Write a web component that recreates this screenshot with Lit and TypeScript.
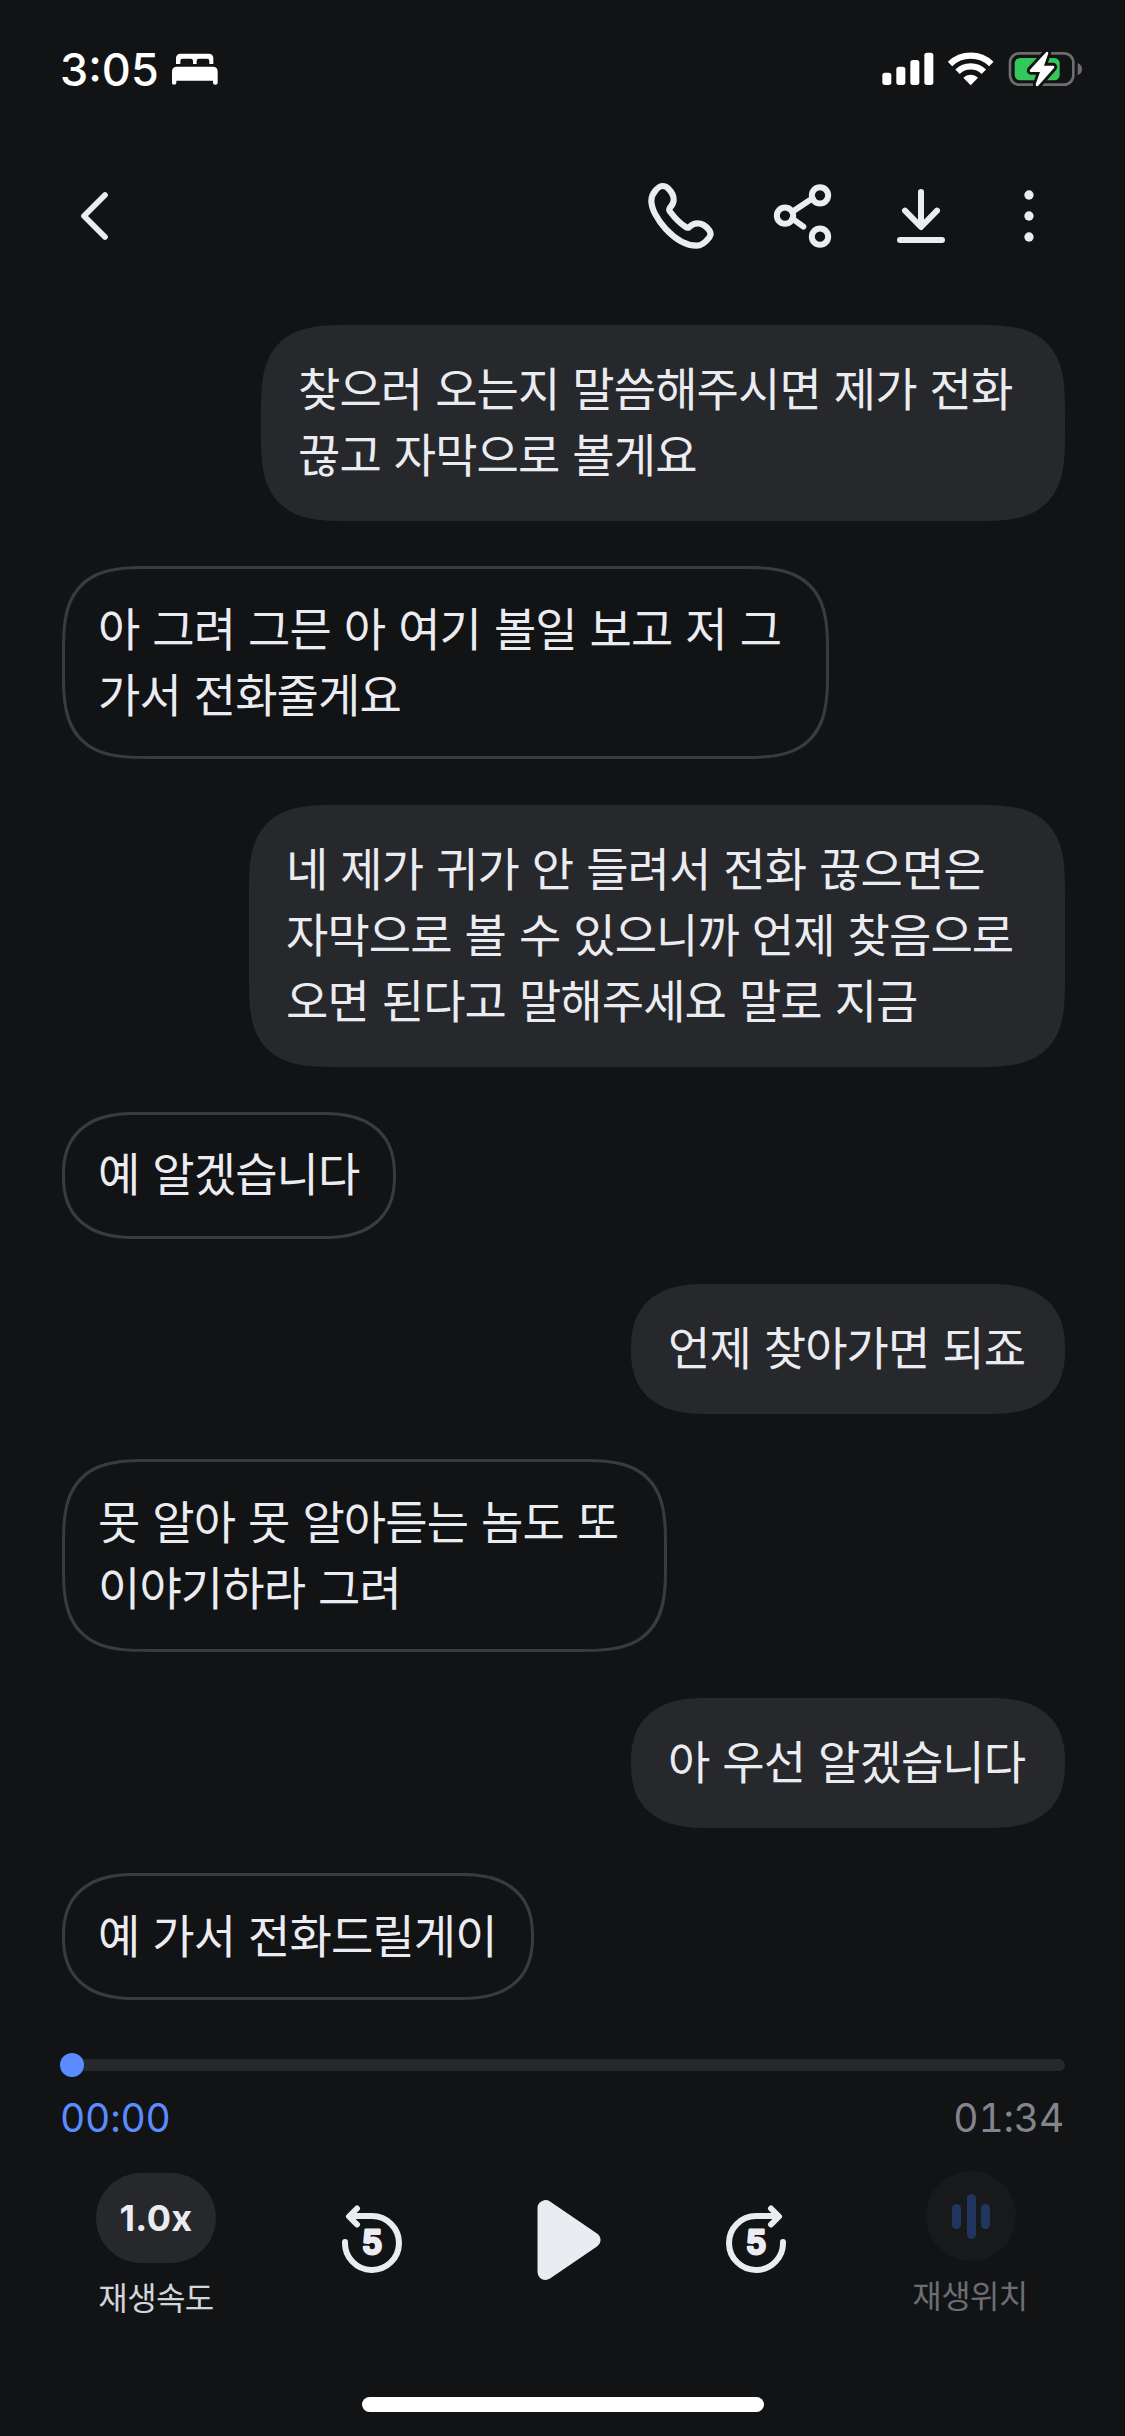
import { LitElement, html, css, svg } from "lit";
import { customElement, property } from "lit/decorators.js";
import { classMap } from "lit/directives/class-map.js";
import { styleMap } from "lit/directives/style-map.js";

interface Message {
  mine: boolean;
  width: number;
  lines: string[];
}

const MESSAGES: Message[] = [
  { mine: true, width: 804, lines: ["찾으러 오는지 말씀해주시면 제가 전화", "끊고 자막으로 볼게요"] },
  { mine: false, width: 767, lines: ["아 그려 그믄 아 여기 볼일 보고 저 그", "가서 전화줄게요"] },
  {
    mine: true,
    width: 816,
    lines: ["네 제가 귀가 안 들려서 전화 끊으면은", "자막으로 볼 수 있으니까 언제 찾음으로", "오면 된다고 말해주세요 말로 지금"],
  },
  { mine: false, width: 334, lines: ["예 알겠습니다"] },
  { mine: true, width: 434, lines: ["언제 찾아가면 되죠"] },
  { mine: false, width: 605, lines: ["못 알아 못 알아듣는 놈도 또", "이야기하라 그려"] },
  { mine: true, width: 434, lines: ["아 우선 알겠습니다"] },
  { mine: false, width: 472, lines: ["예 가서 전화드릴게이"] },
];

@customElement("status-bar")
export class StatusBar extends LitElement {
  static styles = css`
    :host { display: block; }
    .bar {
      display: flex;
      align-items: center;
      height: 138px;
      box-sizing: border-box;
      padding: 0 41.7px 0 60px;
      color: #fff;
    }
    .time {
      font: 500 45px/54px Inter, "Liberation Sans", sans-serif;
      width: 111px;
      padding-top: 1px;
      white-space: nowrap;
    }
    .spacer { flex: 1; }
    svg { display: block; }
    .wifi { margin-left: 13.6px; }
    .battery { margin-left: 13px; }
  `;
  render() {
    return html`
      <div class="bar">
        <span class="time">3:05</span>
        <svg width="48" height="34" viewBox="393 67 144 102" fill="#fff">
          <path d="M408 103V86Q408 72 422 72H506Q520 72 520 86V103H508V94Q508 87 501 87H477Q470 87 470 94V103H459V94Q459 87 452 87H428Q421 87 421 94V103Z" />
          <path d="M396 160V126Q396 111 411 111H518Q533 111 533 126V160Q533 165 526 165Q519 165 519 160V153H409V160Q409 165 402 165Q396 165 396 160Z" />
        </svg>
        <span class="spacer"></span>
        <svg width="52" height="34" viewBox="95 66 156 102" fill="#fff">
          <rect x="96" y="128" width="27" height="37" rx="8" />
          <rect x="138" y="110" width="27" height="55" rx="8" />
          <rect x="180" y="90" width="27" height="75" rx="8" />
          <rect x="222" y="68" width="27" height="97" rx="8" />
        </svg>
        <svg class="wifi" width="48" height="34" viewBox="292 65 144 102">
          <g fill="none" stroke="#fff" stroke-width="19">
            <path d="M301 101A89.5 89.5 0 0 1 425 101" />
            <path d="M323.500 124A57 57 0 0 1 402.500 124" />
          </g>
          <path d="M363 165L341 142A32 32 0 0 1 385 142Z" fill="#fff" />
        </svg>
        <svg class="battery" width="75" height="38" viewBox="475 60 225 114">
          <rect x="481" y="70" width="190" height="94" rx="28" fill="none" stroke="#6d6d6f" stroke-width="8" />
          <path d="M684 99Q697 105 697 117.500T684 136Z" fill="#6d6d6f" />
          <rect x="495" y="84" width="135" height="67" rx="16" fill="#34c759" />
          <path
            d="M590 66L541 119Q538 125 544 126H571L558 163Q558 171 565 168L613 114Q616 108 610 107H583L596 70Q596 64 590 66Z"
            fill="#fff" stroke="#121315" stroke-width="17" paint-order="stroke" stroke-linejoin="round" />
        </svg>
      </div>
    `;
  }
}

@customElement("call-header")
export class CallHeader extends LitElement {
  static styles = css`
    :host { display: block; }
    .header {
      display: flex;
      align-items: center;
      height: 156px;
      padding: 0 88px 0 78px;
    }
    svg { display: block; fill: none; stroke: #ebebf2; stroke-linecap: round; stroke-linejoin: round; }
    .spacer { flex: 1; }
    .share { margin-left: 55px; }
    .download { margin-left: 61px; }
    .more { margin-left: 74px; fill: #ebebf2; stroke: none; }
  `;
  render() {
    return html`
      <div class="header">
        <svg width="34" height="52" viewBox="114 90 102 156" stroke-width="17">
          <path d="M195 105L132 168L195 231" />
        </svg>
        <span class="spacer"></span>
        <svg width="72" height="72" viewBox="75 60 216 216" stroke-width="18.500">
          <path d="M128 78C117 78 94 98 94 122C94 170 165 256 230 257C245 257 258 245 268 232C273 225 273 218 268 211C260 200 246 190 232 190C218 190 212 198 207 202C204 204 200 203 196 200C180 190 160 168 151 156C147 151 147 147 150 143C155 137 161 131 161 119C161 108 154 95 146 87C141 81 135 78 128 78Z" />
        </svg>
        <svg class="share" width="62" height="68" viewBox="456 66 186 204" stroke-width="18">
          <circle cx="600" cy="106" r="24.500" />
          <circle cx="495" cy="167" r="24.500" />
          <circle cx="600" cy="230" r="24.500" />
          <path d="M517 155L578 115M517 176L550 200" />
        </svg>
        <svg class="download" width="52" height="60" viewBox="825 78 156 180" stroke-width="18">
          <path d="M903 96V200M855 152L903 201L951 152M840 240H966" />
        </svg>
        <svg class="more" width="16" height="56" viewBox="1203 84 48 168">
          <circle cx="1227" cy="105" r="14" />
          <circle cx="1227" cy="168" r="14" />
          <circle cx="1227" cy="231" r="14" />
        </svg>
      </div>
    `;
  }
}

@customElement("chat-bubble")
export class ChatBubble extends LitElement {
  @property({ attribute: false }) message!: Message;
  static styles = css`
    :host { display: flex; }
    .bubble {
      box-sizing: border-box;
      border-radius: 64px;
      font: 400 46px/66px "Noto Sans CJK KR", sans-serif;
      letter-spacing: -0.9px;
      word-spacing: 3.5px;
      color: #ebecf1;
      white-space: nowrap;
    }
    .mine { margin-left: auto; padding: 28px 37px 36px; background: #27282b; }
    .theirs { border: 3px solid #3a3b3d; padding: 23.5px 33px 31.5px; }
    @supports (corner-shape: squircle) {
      .bubble { border-radius: 86px; corner-shape: superellipse(1.55); }
      .single { border-radius: 74px / 64px; corner-shape: superellipse(1.28); }
    }
  `;
  render() {
    const m = this.message;
    const classes = { bubble: true, mine: m.mine, theirs: !m.mine, single: m.lines.length === 1 };
    return html`
      <div class=${classMap(classes)} style=${styleMap({ width: `${m.width}px` })}>
        ${m.lines.map((line) => html`<div class="line">${line}</div>`)}
      </div>
    `;
  }
}

@customElement("call-player")
export class CallPlayer extends LitElement {
  static styles = css`
    :host { display: block; }
    .seek { display: flex; align-items: center; height: 24px; margin: 0 60px; }
    .knob { position: relative; width: 24px; height: 24px; border-radius: 50%; background: #5b8cff; }
    .track { flex: 1; height: 12px; margin-left: -6px; border-radius: 0 6px 6px 0; background: #27282b; }
    .times {
      display: flex;
      justify-content: space-between;
      margin: 17px 61px 0 60px;
      font: 400 39px/48px Inter, "Liberation Sans", sans-serif;
      font-variant-numeric: tabular-nums;
      letter-spacing: -0.2px;
      color: #83858c;
    }
    .current { color: #5b8cff; }
    .controls { display: flex; align-items: flex-start; padding: 29px 0 0 96px; }
    .option {
      display: flex;
      flex-direction: column;
      align-items: center;
      width: 120px;
      font: 400 32px/44px "Noto Sans CJK KR", sans-serif;
      letter-spacing: -0.6px;
      white-space: nowrap;
      color: #d3d5dd;
    }
    .speed { padding-top: 2px; }
    .pill {
      width: 120px;
      height: 90px;
      border-radius: 45px;
      background: #27282b;
      color: #ebecf1;
      text-align: center;
      font: 700 36px/90px Inter, "Liberation Sans", sans-serif;
      letter-spacing: 0.4px;
    }
    .label { margin-top: 11px; }
    .position { margin-left: 123px; color: #6b6d74; }
    .position .label { margin-right: 2px; }
    .disc {
      display: flex;
      align-items: center;
      justify-content: center;
      gap: 5.5px;
      width: 90px;
      height: 90px;
      border-radius: 50%;
      background: #18191b;
    }
    .wave { width: 9px; height: 25px; border-radius: 5px; background: #20365e; }
    .tall { height: 45px; }
    svg { display: block; }
    .skip { margin-top: 34px; fill: none; stroke: #ebebf2; stroke-width: 6; stroke-linecap: round; stroke-linejoin: round; }
    .back { margin-left: 124px; }
    .forward { margin-left: 120px; }
    .play { margin-left: 132px; margin-top: 27px; }
    .digit {
      font: 600 32px Inter, "Liberation Sans", sans-serif;
      fill: #ebebf2;
      stroke-width: 2.8;
      text-anchor: middle;
    }
  `;
  render() {
    const digit = svg`<text class="digit" x="32" y="48.500">5</text>`;
    return html`
      <div class="seek"><span class="knob"></span><span class="track"></span></div>
      <div class="times"><span class="current">00:00</span><span>01:34</span></div>
      <div class="controls">
        <div class="option speed">
          <div class="pill">1.0x</div>
          <div class="label">재생속도</div>
        </div>
        <svg class="skip back" width="64" height="72" viewBox="0 0 64 72">
          <path d="M5 37A27 27 0 1 0 32 11H11M17 3.500L9 11.500L17 19.500" />
          ${digit}
        </svg>
        <svg class="play" width="68" height="84" viewBox="0 0 68 84">
          <path d="M9.500 10V74L56.500 42Z" fill="#ebebf2" stroke="#ebebf2" stroke-width="16" stroke-linejoin="round" />
        </svg>
        <svg class="skip forward" width="64" height="72" viewBox="0 0 64 72">
          <path d="M59 37A27 27 0 1 1 32 11H53M47 3.500L55 11.500L47 19.500" />
          ${digit}
        </svg>
        <div class="option position">
          <div class="disc">
            <span class="wave"></span><span class="wave tall"></span><span class="wave"></span>
          </div>
          <div class="label">재생위치</div>
        </div>
      </div>
    `;
  }
}

@customElement("app-root")
export class AppRoot extends LitElement {
  static styles = css`
    :host { display: block; }
    .screen {
      display: flex;
      flex-direction: column;
      width: 1125px;
      height: 2436px;
      overflow: hidden;
      background: #121315;
    }
    .chat {
      display: flex;
      flex-direction: column;
      gap: 45.3px;
      padding: 31px 60px 0 62px;
    }
    .player { margin-top: 53px; }
    .home {
      width: 402px;
      height: 15px;
      margin: auto auto 24px;
      border-radius: 8px;
      background: #fff;
    }
  `;
  render() {
    return html`
      <div class="screen">
        <status-bar></status-bar>
        <call-header></call-header>
        <div class="chat">${MESSAGES.map((m) => html`<chat-bubble .message=${m}></chat-bubble>`)}</div>
        <call-player class="player"></call-player>
        <div class="home"></div>
      </div>
    `;
  }
}
